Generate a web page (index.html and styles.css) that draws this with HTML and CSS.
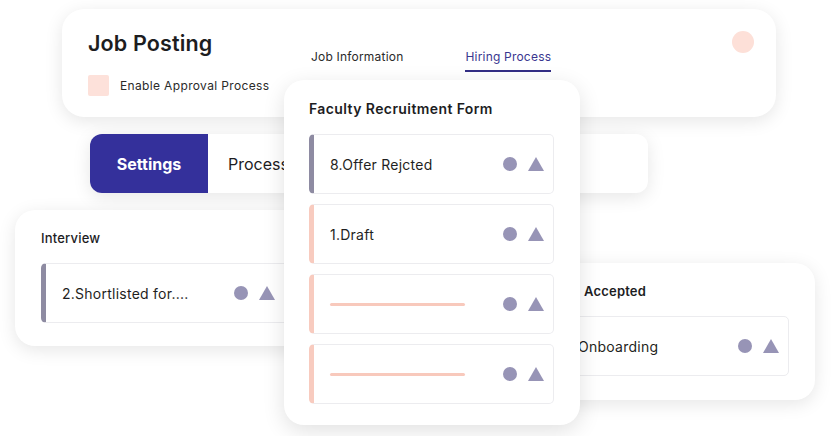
FILE: index.html
```html
<!DOCTYPE html>
<html>
<head>
<meta charset="utf-8">
<link rel="stylesheet" href="styles.css">
</head>
<body>
<div class="canvas">
  <div class="card job">
    <div class="job-left">
      <h1 class="job-title">Job Posting</h1>
      <div class="check-row">
        <span class="checkbox"></span>
        <span class="check-label">Enable Approval Process</span>
      </div>
    </div>
    <div class="tabs">
      <div class="tab">Job Information</div>
      <div class="tab active">Hiring Process</div>
    </div>
    <span class="dot-pink"></span>
  </div>

  <div class="card settings">
    <div class="settings-btn">Settings</div>
    <div class="settings-tab">Process</div>
  </div>

  <div class="card stage interview">
    <div class="stage-title">Interview</div>
    <div class="row gray">
      <span class="row-text">2.Shortlisted for....</span>
      <span class="icons"><span class="circ"></span><span class="tri"></span></span>
    </div>
  </div>

  <div class="card stage accepted">
    <div class="stage-title acc-title">Accepted</div>
    <div class="row plain">
      <span class="row-text">Onboarding</span>
      <span class="icons"><span class="circ"></span><span class="tri"></span></span>
    </div>
  </div>

  <div class="card faculty">
    <div class="fac-title">Faculty Recruitment Form</div>
    <div class="rows">
      <div class="row gray">
        <span class="row-text">8.Offer Rejcted</span>
        <span class="icons"><span class="circ"></span><span class="tri"></span></span>
      </div>
      <div class="row pink">
        <span class="row-text">1.Draft</span>
        <span class="icons"><span class="circ"></span><span class="tri"></span></span>
      </div>
      <div class="row pink">
        <span class="line"></span>
        <span class="icons"><span class="circ"></span><span class="tri"></span></span>
      </div>
      <div class="row pink">
        <span class="line"></span>
        <span class="icons"><span class="circ"></span><span class="tri"></span></span>
      </div>
    </div>
  </div>
</div>
</body>
</html>
```
FILE: styles.css
```css
* { box-sizing: border-box; margin: 0; padding: 0; }
html, body { width: 832px; height: 436px; overflow: hidden; background: #ffffff; }
body { font-family: "Inter", "Noto Sans", sans-serif; color: #1d1d1f; }

.canvas { position: relative; width: 832px; height: 436px; }

.card {
  position: absolute;
  background: #ffffff;
  box-shadow: 0 4px 18px rgba(0, 0, 0, 0.10);
}

/* Job posting card */
.job {
  left: 62px; top: 9px; width: 714px; height: 108px;
  border-radius: 22px;
  display: flex;
  align-items: flex-start;
  padding: 0 22px 0 26px;
}
.job-left { width: 223px; padding-top: 21px; }
.job-title { font-size: 21.5px; font-weight: 600; line-height: 26px; letter-spacing: 0.15px; }
.check-row { display: flex; align-items: center; margin-top: 19px; }
.checkbox { width: 21px; height: 21px; background: #fde1da; border-radius: 2px; }
.check-label { margin-left: 11px; font-size: 12px; color: #2a2a2a; letter-spacing: 0.35px; }

.tabs { display: flex; gap: 62px; padding-top: 40px; }
.tab { font-size: 12px; color: #2a2a2a; line-height: 16px; letter-spacing: 0.2px; padding-bottom: 5px; }
.tab.active { color: #3a3690; border-bottom: 2px solid #342f86; }

.dot-pink {
  margin-left: auto; margin-top: 22px;
  width: 22px; height: 22px; border-radius: 50%;
  background: #fde0d8;
}

/* Settings bar */
.settings {
  left: 90px; top: 134px; width: 558px; height: 59px;
  border-radius: 12px;
  display: flex;
  overflow: hidden;
}
.settings-btn {
  width: 118px;
  background: #34309b;
  color: #ffffff;
  font-weight: 700;
  font-size: 16px;
  display: flex; align-items: center; justify-content: center;
}
.settings-tab {
  padding-left: 20px;
  font-size: 16px;
  display: flex; align-items: center;
  color: #1d1d1f;
}

/* stage cards */
.stage { border-radius: 20px; padding: 0 26px; }
.interview { left: 15px; top: 210px; width: 300px; height: 136px; }
.accepted { left: 531px; top: 263px; width: 284px; height: 137px; }
.stage-title { font-size: 13px; font-weight: 500; line-height: 18px; padding-top: 19px; height: 53px; letter-spacing: 0.2px; }
.acc-title { padding-left: 27px; font-weight: 600; }

/* rows */
.row {
  display: flex; align-items: center;
  height: 60px;
  border: 1px solid #ececef;
  border-radius: 5px;
  background: #ffffff;
  padding-left: 16px;
  padding-right: 9px;
}
.row.gray { border-left: 5px solid #8e8ba2; }
.row.pink { border-left: 5px solid #f8cbbf; }
.row.plain { padding-left: 20px; padding-right: 9px; }
.interview .row { padding-right: 13px; }
.row-text { font-size: 14px; color: #1f1f22; letter-spacing: 0.25px; }
.icons { margin-left: auto; display: flex; align-items: center; gap: 11px; }
.circ { width: 14px; height: 14px; border-radius: 50%; background: #9794b6; }
.tri {
  width: 0; height: 0;
  border-left: 8px solid transparent;
  border-right: 8px solid transparent;
  border-bottom: 14px solid #9794b6;
  margin-top: -1px;
}
.line { width: 135px; height: 3px; background: #f8c9bc; border-radius: 2px; margin-left: 0; }

/* faculty card */
.faculty {
  left: 284px; top: 80px; width: 296px; height: 345px;
  border-radius: 20px;
  padding: 0 26px 0 25px;
  box-shadow: 0 6px 22px rgba(0, 0, 0, 0.12);
}
.fac-title { font-size: 14px; font-weight: 600; line-height: 18px; padding-top: 20px; height: 54px; letter-spacing: 0.4px; }
.rows { display: flex; flex-direction: column; gap: 10px; }
```
